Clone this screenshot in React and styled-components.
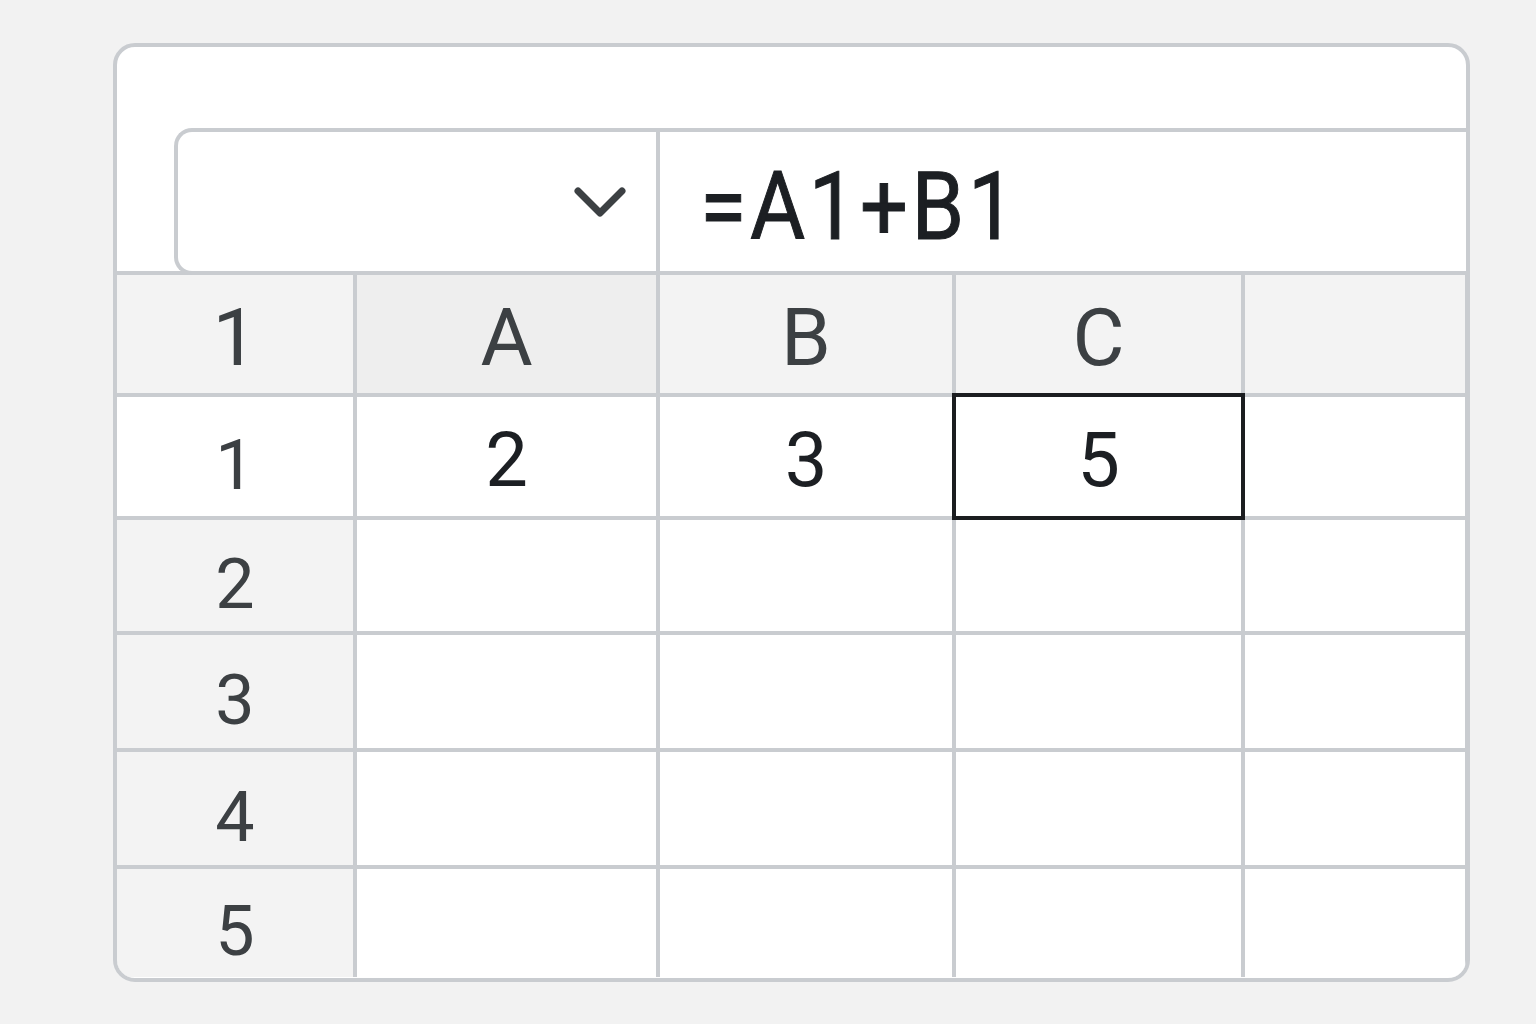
import React from "react";
import styled, { createGlobalStyle } from "styled-components";

const GlobalStyle = createGlobalStyle`
  html, body {
    margin: 0;
    padding: 0;
    background: #f2f2f2;
    font-family: Roboto, "Noto Sans", sans-serif;
  }
`;

const LINE = "#c9ccd0";

const Page = styled.div`
  padding: 43px 0 0 113px;
  height: 1024px;
  box-sizing: border-box;
`;

const Card = styled.div`
  width: 1357px;
  height: 939px;
  box-sizing: border-box;
  border: 4px solid ${LINE};
  border-radius: 22px;
  background: #fff;
  overflow: hidden;
  display: flex;
  flex-direction: column;
  padding-top: 81px;
`;

const FormulaBar = styled.div`
  position: relative;
  z-index: 1;
  margin-left: 57px;
  margin-bottom: -4px;
  height: 147px;
  box-sizing: border-box;
  border: 4px solid ${LINE};
  border-right: none;
  border-radius: 18px 0 0 18px;
  display: flex;
  background: #fff;
`;

const NameBox = styled.div`
  width: 482px;
  border-right: 4px solid ${LINE};
  display: flex;
  align-items: center;
  justify-content: flex-end;
  padding: 0 29px 0 0;
  box-sizing: border-box;
`;

const Formula = styled.div`
  flex: 1;
  display: flex;
  align-items: center;
  padding: 10px 0 0 40px;
  font-size: 94px;
  font-weight: 400;
  color: #1c1f23;
`;

const FormulaText = styled.span`
  display: inline-block;
  transform: scaleX(0.9);
  transform-origin: left center;
  letter-spacing: 4px;
  -webkit-text-stroke: 1px #1c1f23;
`;

const Grid = styled.div`
  display: grid;
  grid-template-columns: 236px 299px 292px 285px 220px;
  grid-template-rows: 118px 119px 111px 113px 113px 108px;
  gap: 4px;
  background: ${LINE};
  border-top: 4px solid ${LINE};
`;

const Cell = styled.div`
  position: relative;
  display: flex;
  align-items: center;
  justify-content: center;
  background: ${(p) => (p.$shade === "dark" ? "#eeeeee" : p.$shade ? "#f3f3f3" : "#fff")};
  color: ${(p) => (p.$head ? "#3c4043" : "#1c1f23")};
  font-size: ${(p) => p.$size || 76}px;
  padding-top: ${(p) => p.$drop || 0}px;
  box-sizing: border-box;
`;

const Selection = styled.div`
  position: absolute;
  inset: -4px;
  border: 4px solid #1b1d20;
  pointer-events: none;
`;

const Chevron = () => (
  <svg width="54" height="34" viewBox="0 0 54 34">
    <polyline
      points="5,6 27,28 49,6"
      fill="none"
      stroke="#3c4043"
      strokeWidth="7"
      strokeLinecap="round"
      strokeLinejoin="round"
    />
  </svg>
);

const rows = [
  { label: "1", values: ["2", "3", "5", ""] },
  { label: "2", values: ["", "", "", ""] },
  { label: "3", values: ["", "", "", ""] },
  { label: "4", values: ["", "", "", ""] },
  { label: "5", values: ["", "", "", ""] },
];

export default function App() {
  return (
    <>
      <GlobalStyle />
      <Page>
        <Card>
          <FormulaBar>
            <NameBox>
              <Chevron />
            </NameBox>
            <Formula>
              <FormulaText>=A1+B1</FormulaText>
            </Formula>
          </FormulaBar>
          <Grid>
            <Cell $shade $head $size={80} $drop={8}>1</Cell>
            <Cell $shade="dark" $head $size={80} $drop={8}>A</Cell>
            <Cell $shade $head $size={80} $drop={8}>B</Cell>
            <Cell $shade $head $size={80} $drop={8}>C</Cell>
            <Cell $shade />
            {rows.map((row, r) => (
              <React.Fragment key={row.label}>
                <Cell $shade={r > 0} $head $size={70} $drop={16}>
                  {row.label}
                </Cell>
                {row.values.map((v, c) => (
                  <Cell key={c} $drop={6}>
                    {v}
                    {r === 0 && c === 2 && <Selection />}
                  </Cell>
                ))}
              </React.Fragment>
            ))}
          </Grid>
        </Card>
      </Page>
    </>
  );
}
